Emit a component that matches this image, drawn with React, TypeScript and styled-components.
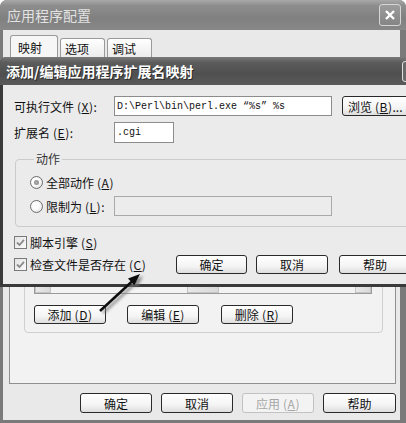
import React from "react";
import styled, { createGlobalStyle } from "styled-components";

const FONT = `"Noto Sans CJK SC", "Liberation Sans", sans-serif`;
const MONO = `"Liberation Mono", "DejaVu Sans Mono", monospace`;

const Global = createGlobalStyle`
  html, body { margin: 0; padding: 0; background: #fff; }
  #root { width: 406px; height: 423px; }
`;

const Screen = styled.div`
  position: relative;
  width: 406px;
  height: 423px;
  overflow: hidden;
  font-family: ${FONT};
  font-size: 12px;
  color: #111;
`;

/* ---------- outer dialog ---------- */
const OuterWindow = styled.div`
  width: 406px;
  height: 423px;
  display: flex;
  flex-direction: column;
  background: #7a7a7a;
  border-radius: 7px 7px 0 0;
  overflow: hidden;
`;

const OuterTitle = styled.div`
  height: 30px;
  flex: none;
  display: flex;
  align-items: center;
  justify-content: space-between;
  padding: 0 5px 0 7px;
  background: linear-gradient(#a9a9a9, #8e8e8e 18%, #808080 60%, #888888);
  color: #e2e2e2;
  font-size: 14px;
`;

const CloseButton = styled.div`
  width: 22px;
  height: 22px;
  box-sizing: border-box;
  border: 1px solid #d6d6d6;
  border-radius: 3px;
  background: linear-gradient(#9c9c9c, #858585);
  display: flex;
  align-items: center;
  justify-content: center;
`;

const Client = styled.div`
  flex: 1;
  display: flex;
  flex-direction: column;
  margin: 0 6px 3px 3px;
  padding: 5px 4px 7px 6px;
  background: #e9e9e9;
`;

const TabStrip = styled.div`
  height: 22px;
  flex: none;
  display: flex;
  align-items: flex-end;
  padding-left: 1px;
`;

const Tab = styled.div<{ $active?: boolean; $w: number }>`
  width: ${(p) => p.$w}px;
  height: ${(p) => (p.$active ? 23 : 19)}px;
  box-sizing: border-box;
  border: 1px solid #9a9a9a;
  border-bottom: none;
  border-radius: 3px 3px 0 0;
  background: ${(p) => (p.$active ? "#f6f6f6" : "linear-gradient(#ffffff, #ececec)")};
  margin-right: 2px;
  padding-left: ${(p) => (p.$active ? 7 : 4)}px;
  margin-bottom: ${(p) => (p.$active ? -1 : 0)}px;
  position: relative;
  display: flex;
  align-items: center;
  font-size: 12px;
`;

const TabPanel = styled.div`
  flex: 1;
  display: flex;
  flex-direction: column;
  border: 1px solid #8f8f8f;
  background: #f2f2f2;
  padding: 12px 12px 50px 14px;
`;

const MapGroup = styled.div`
  flex: 1;
  display: flex;
  flex-direction: column;
  border: 1px solid #cfcfcf;
  border-radius: 4px;
  padding: 20px 10px 8px 9px;
`;

const ListBox = styled.div`
  flex: 1;
  display: flex;
  flex-direction: column;
  justify-content: flex-end;
  border: 1px solid #9a9a9a;
  background: #fff;
`;

const HScroll = styled.div`
  height: 16px;
  display: flex;
  background: #f0f0f0;
`;

const ScrollPart = styled.div<{ $w?: number; $fill?: boolean }>`
  ${(p) => (p.$fill ? "flex: 1;" : `width: ${p.$w}px;`)}
  box-sizing: border-box;
  border: 1px solid ${(p) => (p.$fill ? "transparent" : "#c4c4c4")};
  background: ${(p) => (p.$fill ? "#f3f3f3" : "linear-gradient(90deg, #e8e8e8, #d9d9d9)")};
`;

const ButtonRow = styled.div<{ $gap: number }>`
  display: flex;
  gap: ${(p) => p.$gap}px;
  align-items: center;
`;

const GroupButtons = styled(ButtonRow)`
  margin-top: 11px;
`;

const DialogButtons = styled(ButtonRow)`
  margin-top: 9px;
  justify-content: flex-end;
`;

const Btn = styled.div<{
  $w?: number;
  $h?: number;
  $disabled?: boolean;
  $push?: number;
  $left?: boolean;
}>`
  width: ${(p) => p.$w ?? 72}px;
  height: ${(p) => p.$h ?? 20}px;
  flex: none;
  box-sizing: border-box;
  margin-left: ${(p) => p.$push ?? 0}px;
  padding-left: ${(p) => (p.$left ? 5 : 0)}px;
  border: 1px solid ${(p) => (p.$disabled ? "#c2c2c2" : "#2a2a2a")};
  border-radius: 3px;
  background: ${(p) =>
    p.$disabled ? "#f3f3f3" : "linear-gradient(#ffffff, #f4f4f4 60%, #dedede)"};
  color: ${(p) => (p.$disabled ? "#a6a6a6" : "#111")};
  display: flex;
  align-items: center;
  justify-content: ${(p) => (p.$left ? "flex-start" : "center")};
  font-size: 12px;
  white-space: nowrap;
`;

/* ---------- inner dialog (modal on top) ---------- */
const InnerWindow = styled.div`
  position: absolute;
  left: 0;
  top: 57px;
  width: 440px;
  height: 230px;
  display: flex;
  flex-direction: column;
  background: #3a3a3a;
  border-radius: 6px 6px 0 0;
  overflow: hidden;
`;

const InnerTitle = styled.div`
  height: 28px;
  flex: none;
  display: flex;
  align-items: center;
  justify-content: space-between;
  padding: 0 16px 0 6px;
  background: linear-gradient(#7a7a7a, #5c5c5c 20%, #4f4f4f 60%, #5a5a5a);
  color: #fff;
  font-weight: bold;
  font-size: 14px;
  text-shadow: 1px 1px 0 #2a2a2a;
`;

const InnerClose = styled.div`
  width: 22px;
  height: 21px;
  box-sizing: border-box;
  border: 1px solid #e0e0e0;
  border-radius: 3px;
  background: #6a6a6a;
`;

const InnerBody = styled.div`
  flex: 1;
  display: flex;
  flex-direction: column;
  margin: 0 0 3px 3px;
  padding: 11px 0 0 11px;
  background: #ebebeb;
`;

const FieldRow = styled.div<{ $h: number; $mt?: number }>`
  height: ${(p) => p.$h}px;
  margin-top: ${(p) => p.$mt ?? 0}px;
  display: flex;
  align-items: center;
`;

const FieldLabel = styled.div<{ $w: number }>`
  width: ${(p) => p.$w}px;
  flex: none;
  white-space: nowrap;
`;

const TextBox = styled.div<{ $w: number; $disabled?: boolean }>`
  width: ${(p) => p.$w}px;
  height: 100%;
  flex: none;
  box-sizing: border-box;
  border: 1px solid ${(p) => (p.$disabled ? "#a9a9a9" : "#8c8c8c")};
  background: ${(p) => (p.$disabled ? "#ececec" : "#fff")};
  padding-left: 2px;
  display: flex;
  align-items: center;
  font-family: ${MONO};
  font-size: 10px;
  white-space: pre;
`;

const Keys = styled.span`
  margin-left: 3px;
  letter-spacing: 0.5px;
`;

const ActionGroup = styled.fieldset`
  width: 410px;
  box-sizing: border-box;
  margin: 8px 0 0 1px;
  padding: 7px 0 10px 14px;
  border: 1px solid #cbcbcb;
  border-radius: 4px;
  display: flex;
  flex-direction: column;
  gap: 6px;
`;

const GroupLegend = styled.legend`
  padding: 0 2px;
  margin-left: 4px;
  color: #333;
  line-height: 16px;
`;

const Option = styled.div<{ $h: number }>`
  height: ${(p) => p.$h}px;
  display: flex;
  align-items: center;
`;

const OptionText = styled.span<{ $w?: number }>`
  margin-left: 3px;
  ${(p) => (p.$w ? `width: ${p.$w}px;` : "")}
  white-space: nowrap;
`;

const RadioMark = styled.span<{ $checked?: boolean }>`
  width: 13px;
  height: 13px;
  flex: none;
  box-sizing: border-box;
  border-radius: 50%;
  border: 1px solid #6c6c6c;
  background: radial-gradient(circle at 40% 40%, #ffffff 35%, #d8d8d8);
  display: flex;
  align-items: center;
  justify-content: center;
  &::after {
    content: "";
    width: 5px;
    height: 5px;
    border-radius: 50%;
    background: ${(p) => (p.$checked ? "radial-gradient(#b0b0b0, #7e7e7e)" : "transparent")};
  }
`;

const CheckMark = styled.span`
  width: 13px;
  height: 13px;
  flex: none;
  box-sizing: border-box;
  border: 1px solid #7a7a7a;
  background: linear-gradient(135deg, #e4e4e4, #fafafa);
  display: flex;
  align-items: center;
  justify-content: center;
`;

const CheckRow = styled.div<{ $h: number; $mt: number }>`
  height: ${(p) => p.$h}px;
  margin-top: ${(p) => p.$mt}px;
  display: flex;
  align-items: center;
`;

const CheckText = styled.span<{ $w?: number }>`
  margin-left: 3px;
  white-space: nowrap;
  ${(p) => (p.$w ? `width: ${p.$w}px;` : "")}
`;

const ArrowLayer = styled.svg`
  position: absolute;
  left: 0;
  top: 0;
  pointer-events: none;
`;

const K = ({ k }: { k: string }) => (
  <Keys>
    (<u>{k}</u>)
  </Keys>
);

const Tick = () => (
  <svg width="9" height="9" viewBox="0 0 9 9">
    <path d="M1 4.5 L3.5 7 L8 1.8" fill="none" stroke="#8a8a8a" strokeWidth="1.8" />
  </svg>
);

export default function App() {
  return (
    <Screen>
      <Global />
      <OuterWindow>
        <OuterTitle>
          <span>应用程序配置</span>
          <CloseButton>
            <svg width="12" height="12" viewBox="0 0 12 12">
              <path d="M2 2 L10 10 M10 2 L2 10" stroke="#fff" strokeWidth="2.4" />
            </svg>
          </CloseButton>
        </OuterTitle>
        <Client>
          <TabStrip>
            <Tab $active $w={48}>映射</Tab>
            <Tab $w={45}>选项</Tab>
            <Tab $w={45}>调试</Tab>
          </TabStrip>
          <TabPanel>
            <MapGroup>
              <ListBox>
                <HScroll>
                  <ScrollPart $w={16} />
                  <ScrollPart $fill />
                  <ScrollPart $w={32} />
                  <ScrollPart $w={4} $fill />
                  <ScrollPart $w={16} />
                </HScroll>
              </ListBox>
              <GroupButtons $gap={21}>
                <Btn $h={19}>
                  添加<K k="D" />
                </Btn>
                <Btn $h={19}>
                  编辑<K k="E" />
                </Btn>
                <Btn $h={19} $push={1}>
                  删除<K k="R" />
                </Btn>
              </GroupButtons>
            </MapGroup>
          </TabPanel>
          <DialogButtons $gap={9}>
            <Btn>确定</Btn>
            <Btn>取消</Btn>
            <Btn $disabled>
              应用<K k="A" />
            </Btn>
            <Btn $w={73}>帮助</Btn>
          </DialogButtons>
        </Client>
      </OuterWindow>

      <InnerWindow>
        <InnerTitle>
          <span>添加/编辑应用程序扩展名映射</span>
          <InnerClose />
        </InnerTitle>
        <InnerBody>
          <FieldRow $h={20}>
            <FieldLabel $w={100}>
              可执行文件<K k="X" />:
            </FieldLabel>
            <TextBox $w={218}>D:\Perl\bin\perl.exe “%s” %s</TextBox>
            <Btn $w={80} $h={20} $push={10} $left>
              浏览<K k="B" />...
            </Btn>
          </FieldRow>
          <FieldRow $h={21} $mt={6}>
            <FieldLabel $w={100}>
              扩展名<K k="E" />:
            </FieldLabel>
            <TextBox $w={60}>.cgi</TextBox>
          </FieldRow>
          <ActionGroup>
            <GroupLegend>动作</GroupLegend>
            <Option $h={16}>
              <RadioMark $checked />
              <OptionText>
                全部动作<K k="A" />
              </OptionText>
            </Option>
            <Option $h={20}>
              <RadioMark />
              <OptionText $w={68}>
                限制为<K k="L" />:
              </OptionText>
              <TextBox $w={218} $disabled />
            </Option>
          </ActionGroup>
          <CheckRow $h={16} $mt={7}>
            <CheckMark>
              <Tick />
            </CheckMark>
            <CheckText>
              脚本引擎<K k="S" />
            </CheckText>
          </CheckRow>
          <CheckRow $h={19} $mt={5}>
            <CheckMark>
              <Tick />
            </CheckMark>
            <CheckText $w={146}>
              检查文件是否存在<K k="C" />
            </CheckText>
            <ButtonRow $gap={9}>
              <Btn $w={71} $h={19}>确定</Btn>
              <Btn $w={72} $h={19}>取消</Btn>
              <Btn $w={72} $h={19} $push={2}>帮助</Btn>
            </ButtonRow>
          </CheckRow>
        </InnerBody>
      </InnerWindow>

      <ArrowLayer width="406" height="423" viewBox="0 0 406 423">
        <defs>
          <filter id="arrowShadow" x="-50%" y="-50%" width="200%" height="200%">
            <feDropShadow dx="3" dy="2" stdDeviation="1.6" floodColor="#777" floodOpacity="0.8" />
          </filter>
        </defs>
        <g filter="url(#arrowShadow)">
          <line x1="100" y1="311" x2="132" y2="281.5" stroke="#111" strokeWidth="2.6" />
          <polygon points="140,274 134.4,285.6 128,278.6" fill="#111" />
        </g>
      </ArrowLayer>
    </Screen>
  );
}
